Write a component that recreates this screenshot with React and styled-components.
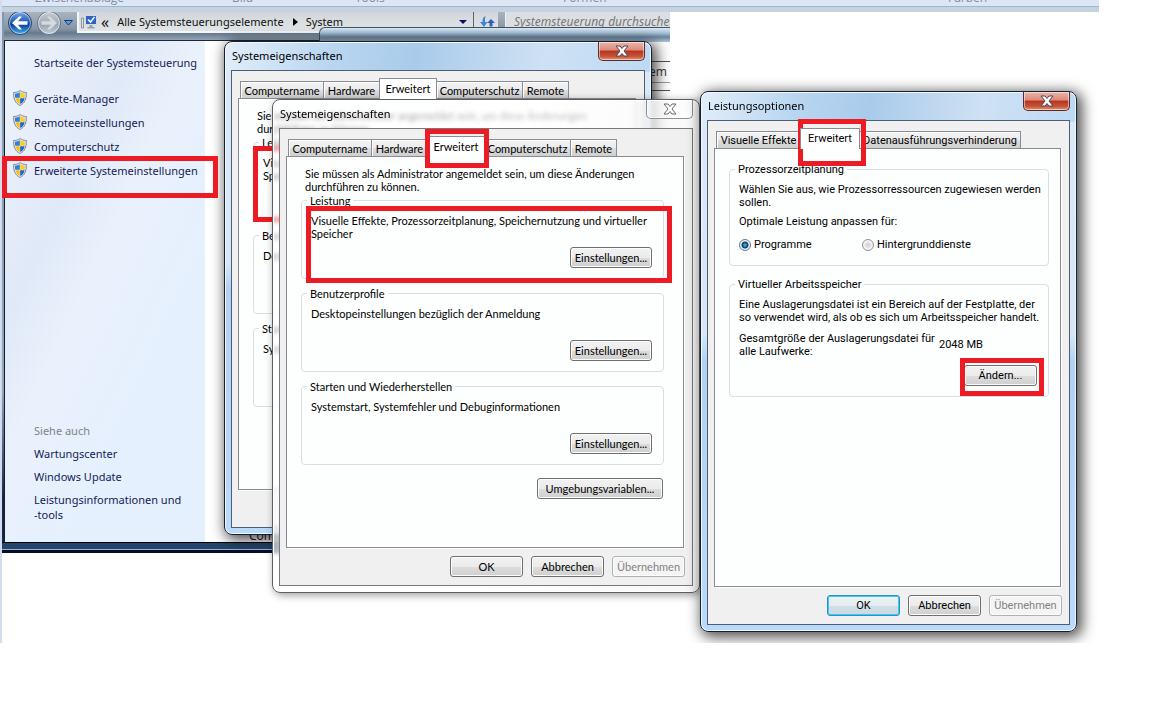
import React, { useState } from "react";
import styled, { createGlobalStyle, css } from "styled-components";

const GlobalStyle = createGlobalStyle`
    * {
        box-sizing: border-box;
    }

    body {
        margin: 0;
        background: #fff;
        color: #000;
        font-family: "Open Sans", "Noto Sans", sans-serif;
        font-size: 11px;
    }

    button, input {
        font: inherit;
        color: inherit;
        margin: 0;
        padding: 0;
    }

    p, h2 {
        margin: 0;
        font-weight: normal;
    }

    a {
        color: inherit;
        text-decoration: none;
    }
`;

const uiFont = `"Noto Sans", "Open Sans", sans-serif`;

// Desktop
const Desktop = styled.main`
    position: relative;
    height: 643px;
    overflow: hidden;
    border-left: 2px solid #d3dded;
`;

const Ribbon = styled.header`
    max-width: 1099px;
    height: 12px;
    margin-left: -2px;
    background: #c5d2e0;
`;

const RibbonLabels = styled.div`
    display: grid;
    grid-template-columns: 197px 123px 208px 385px 1fr;
    align-content: end;
    height: 7px;
    padding: 0 0 1px 35px;
    overflow: hidden;
    background: #dce6f4;
    border-bottom: 1px solid #9fb6cc;
    color: #7f8fa5;
    font-size: 12px;
    line-height: 15px;
`;

const Placed = styled.div`
    position: absolute;
    left: ${(p) => p.$x}px;
    top: ${(p) => p.$y}px;
    width: ${(p) => p.$w}px;
    height: ${(p) => p.$h}px;
`;

const Mark = styled(Placed)`
    border: 5px solid #ed1c24;
    pointer-events: none;
`;

// Explorer window
const Explorer = styled(Placed)`
    display: flex;
    flex-direction: column;
    overflow: hidden;
    padding-left: 2px;
    background: linear-gradient(#8498ab, #8fa5ba 70%, #12294c 90%);
    font-family: ${uiFont};
`;

const AddressRow = styled.div`
    display: flex;
    align-items: flex-start;
    height: 29px;
    background: linear-gradient(#a8b3bf, #8696a6 60%, #66798c 75%, #93a5b6);
    border-bottom: 1px solid #1c2733;
`;

const NavButtons = styled.div`
    display: flex;
    align-items: center;
    width: 72px;
    height: 21px;
    margin-right: 1px;
`;

const PlainButton = styled.button`
    display: flex;
    align-items: center;
    justify-content: center;
    flex: none;
    width: ${(p) => p.$w}px;
    height: 20px;
    border: none;
    background: none;
    overflow: visible;
`;

const AddressBox = styled.nav`
    display: flex;
    align-items: center;
    width: 421px;
    height: 21px;
    padding-left: 2px;
    background: linear-gradient(#d2d6da, #e2e5e7);
    border: solid #f4f6f8;
    border-width: 0 0 2px 2px;
    color: #111;
    white-space: nowrap;
`;

const Chevrons = styled.span`
    margin-left: 4px;
    font-size: 16px;
    line-height: 16px;
`;

const Crumb = styled.a`
    margin: 0 8px;
`;

const Spacer = styled.span`
    flex: 1;
`;

const RefreshSlot = styled.span`
    display: flex;
    align-items: center;
    height: 20px;
    padding-left: 2px;
    border-left: 1px solid #60656c;
`;

const SearchBox = styled.input`
    flex: 1;
    min-width: 0;
    height: 21px;
    margin-left: 7px;
    padding-left: 8px;
    border: solid #eef1f4;
    border-width: 0 0 2px 1px;
    border-radius: 0;
    background: #dcdfe2;
    font-size: 12px;
    font-style: italic;

    &::placeholder {
        color: #777;
        opacity: 1;
    }
`;

const ExplorerBody = styled.div`
    display: flex;
    flex: 1;
    border-left: 1px solid #111c2c;
    background: #fff;
`;

const Sidebar = styled.nav`
    display: flex;
    flex-direction: column;
    width: 200px;
    padding: 14px 0 20px 8px;
    background: linear-gradient(115deg, #eef4fc, #e0e9f8 30%, #e9f1fc 45%, #e5f0fe 70%);
    color: #151c55;
    line-height: 15px;

    svg {
        flex: none;
    }
`;

const SideLink = styled.a`
    display: flex;
    align-items: center;
    gap: 7px;
    margin-bottom: ${(p) => p.$gap || 0}px;
    padding-left: ${(p) => (p.$icon ? 0 : 21)}px;
    white-space: nowrap;
`;

const SideHeading = styled.p`
    margin: auto 0 8px;
    padding-left: 21px;
    color: #7c8488;
`;

const ExplorerContent = styled.div`
    display: flex;
    align-items: flex-end;
    flex: 1;
    padding-left: 44px;
    color: #331c1c;
    font-size: 12px;
    line-height: 13px;
`;

const ExplorerEdge = styled.div`
    height: 11px;
    margin-left: -2px;
    background: #050d28;
    border-top: 1px solid #000;

    &::before {
        content: "";
        display: block;
        height: 6px;
        background: #24456c;
        border-bottom: 1px solid #9db4cb;
    }
`;

const BackPane = styled(Placed)`
    overflow: hidden;
    background: linear-gradient(#dceaf6, #a4bfd6 5px, #6b869f 9px, #b0c6da 14px, #fff 14px);
    border: solid #44525f;
    border-width: 1px 0 0 1px;
    border-radius: 6px 0 0 0;
    padding-top: 13px;
    font-family: ${uiFont};
    color: #444;
    font-size: 12px;
    text-align: right;
`;

const PaneRow = styled.div`
    height: ${(p) => p.$h}px;
    padding-right: 3px;
    border-bottom: 1px solid ${(p) => p.$line};
    line-height: 20px;
`;

// Dialog windows
const blueGlass = css`
    background:
        linear-gradient(100deg, #e2eefa, #b9d6f1 25%, #a9cbea 45%, #cfe1f4 75%, #bcd9f5) 0 0 / 100% 30px no-repeat,
        linear-gradient(#dbe9f8, #d6e7f8 45%, #b2d2f4 50%, #b9dafb);
    border-color: #15202e;
    box-shadow: inset 0 0 0 1px #f0f8ff, 3px 3px 14px 2px rgba(0, 0, 0, 0.7);
`;

const paleGlass = css`
    background: linear-gradient(100deg, rgba(255, 255, 255, 0.55), rgba(255, 255, 255, 0.75) 50%, rgba(244, 244, 244, 0.7));
    backdrop-filter: blur(2px);
    border-color: #5c5f62;
    box-shadow: inset 0 0 0 1px #fff, 2px 2px 8px rgba(0, 0, 0, 0.4);
`;

const DialogFrame = styled(Placed)`
    display: flex;
    flex-direction: column;
    padding: 0 6px 6px;
    border: 1px solid;
    border-radius: 8px;
    ${(p) => (p.$active ? blueGlass : paleGlass)}
`;

const TitleBar = styled.div`
    display: flex;
    align-items: flex-start;
    justify-content: space-between;
    height: 28px;
    padding-left: 1px;
`;

const Title = styled.h2`
    font-family: ${uiFont};
    font-size: 11px;
    line-height: 28px;
`;

const CloseButton = styled.button`
    display: flex;
    align-items: center;
    justify-content: center;
    width: 47px;
    height: 19px;
    border: 1px solid ${(p) => (p.$active ? "#5b2a2a" : "#8b9096")};
    border-top: none;
    border-radius: 0 0 5px 5px;
    background: ${(p) =>
        p.$active
            ? "linear-gradient(#eab5a8, #dd8a7a 45%, #b8341f 50%, #c4553a 80%, #e09a6c)"
            : "rgba(255, 255, 255, 0.3)"};
    box-shadow: inset 0 0 0 1px rgba(255, 255, 255, 0.5);
`;

const Client = styled.div`
    display: flex;
    flex: 1;
    flex-direction: column;
    padding: 7px 8px 8px 6px;
    background: #f0f0f0;
    border: 1px solid ${(p) => (p.$active ? "#4d5d72" : "#77797b")};
    font-family: ${(p) => p.$font};
    font-size: 11px;
    line-height: 13px;
`;

const TabList = styled.div`
    display: flex;
    align-items: flex-end;
    height: 20px;
    padding-left: 2px;
`;

const Tab = styled.button`
    width: ${(p) => p.$w}px;
    height: 17px;
    margin-right: -1px;
    border: 1px solid #898c95;
    border-bottom: none;
    background: linear-gradient(#f3f3f3, #ebebeb 50%, #dddddd 51%, #cfcfcf);
    box-shadow: inset 1px 1px 0 #fff;
    white-space: nowrap;

    ${(p) =>
        p.$selected &&
        css`
            position: relative;
            z-index: 1;
            height: 21px;
            margin-bottom: -1px;
            padding-bottom: 2px;
            background: #fff;
        `}
`;

const Panel = styled.div`
    display: flex;
    flex: 1;
    flex-direction: column;
    gap: ${(p) => p.$gap}px;
    padding: ${(p) => p.$pad};
    background: #fdfefe;
    border: 1px solid #898c95;
    box-shadow: 1px 1px 0 #fff;
`;

const Intro = styled.p`
    margin: 0 0 -7px 4px;
`;

const Group = styled.fieldset`
    min-width: 0;
    margin: 0;
    padding: 7px 11px 10px 9px;
    border: 1px solid #d5dfe5;
    border-radius: 4px;
`;

const Legend = styled.legend`
    margin-left: -4px;
    padding: 0 3px;
`;

const GroupBody = styled.div`
    display: flex;
    flex-direction: column;
    justify-content: space-between;
    gap: ${(p) => p.$gap || 0}px;
    min-height: ${(p) => p.$h || 0}px;
`;

const Lines = styled.p`
    white-space: nowrap;
`;

const PushButton = styled.button`
    align-self: flex-end;
    width: ${(p) => p.$w || 73}px;
    height: 21px;
    border: 1px solid #707070;
    border-radius: 3px;
    background: linear-gradient(#f2f2f2, #ebebeb 50%, #dddddd 51%, #cfcfcf);
    box-shadow: inset 0 0 0 1px #fcfcfc;
    white-space: nowrap;

    ${(p) =>
        p.$primary &&
        css`
            border-color: #2f8fc0;
            background: linear-gradient(#eef3f6, #e3ecf1 50%, #d3dfe6 51%, #ccd8e0);
            box-shadow: inset 0 0 0 1px #35cdf8;
        `}

    &:disabled {
        border-color: #adb2b5;
        background: #f4f4f4;
        color: #838383;
    }
`;

const Footer = styled.div`
    display: flex;
    justify-content: flex-end;
    gap: 8px;
    margin-right: -1px;
    padding-top: 8px;
`;

const PanelActions = styled.div`
    display: flex;
    justify-content: flex-end;
    padding: 5px 1px 0 0;
`;

const RadioRow = styled.div`
    display: grid;
    grid-template-columns: 123px 1fr;
    margin: 4px 0;
`;

const RadioLabel = styled.label`
    display: flex;
    align-items: center;
    gap: 3px;
`;

const Radio = styled.input`
    appearance: none;
    width: 12px;
    height: 12px;
    border: 1px solid #8e8f8f;
    border-radius: 50%;
    background: radial-gradient(#d8d8d8 20%, #f6f6f6 60%);

    &:checked {
        border-color: #5c7a94;
        background: radial-gradient(circle, #4fc0f0 0, #0b3a60 3px, #f2f5f7 4px);
    }
`;

const SizeRow = styled.div`
    display: grid;
    grid-template-columns: 200px 1fr;
    align-items: center;
`;

function CloseIcon({ active }) {
    const d = "M1 1h4l2 2.5L9 1h4L9 6l4 5H9L7 8.500 5 11H1l4-5z";
    return (
        <svg width="14" height="12" viewBox="0 0 14 12" aria-hidden="true">
            <path d={d} fill="#fff" stroke={active ? "#4e4658" : "#63676b"} strokeWidth="1" />
        </svg>
    );
}

function ShieldIcon() {
    return (
        <svg width="14" height="16" viewBox="0 0 14 16" aria-hidden="true">
            <path d="M7 .5C5 2 3 2.500.6 2.500.5 9 2 13 7 15.500 12 13 13.500 9 13.400 2.500 11 2.500 9 2 7 .5z" fill="#e6e9ec" stroke="#84898f" />
            <path d="M6.800 2.200v5.600H2.200C2 6.500 1.900 5 1.900 3.700 4 3.600 5.500 3 6.800 2.200z" fill="#2f7fd6" />
            <path d="M7.200 2.200v5.600h4.600c.2-1.300.3-2.800.3-4.100C10 3.600 8.500 3 7.200 2.200z" fill="#f6cf2e" />
            <path d="M6.800 8.200v5.900C4.200 12.700 2.800 10.700 2.300 8.200z" fill="#f3c220" />
            <path d="M7.200 8.200v5.900c2.600-1.400 4-3.400 4.500-5.900z" fill="#1f63bd" />
        </svg>
    );
}

function ArrowDisc({ back }) {
    const id = back ? "disc-back" : "disc-forward";
    return (
        <svg width="26" height="26" viewBox="0 0 26 26" aria-hidden="true">
            <defs>
                <linearGradient id={id} x1="0" y1="0" x2="0" y2="1">
                    <stop offset="0" stopColor={back ? "#7aa9e4" : "#c6ccd2"} />
                    <stop offset=".5" stopColor={back ? "#1c55b4" : "#a3adb7"} />
                    <stop offset=".55" stopColor={back ? "#0b3b98" : "#98a4af"} />
                    <stop offset="1" stopColor={back ? "#3fb5f2" : "#c4ccd4"} />
                </linearGradient>
            </defs>
            <circle cx="13" cy="13" r="11.500" fill={`url(#${id})`} stroke={back ? "#2a466f" : "#657483"} />
            <circle cx="13" cy="13" r="10.500" fill="none" stroke="#fff" strokeOpacity=".55" />
            <path
                d="M5 13l7-6.500h3L11 11.300h9.500v3.400H11l4 4.800h-3z"
                transform={back ? undefined : "rotate(180 13 13)"}
                fill={back ? "#fff" : "#d5dade"}
            />
        </svg>
    );
}

function MonitorIcon() {
    return (
        <svg width="16" height="16" viewBox="0 0 16 16" aria-hidden="true">
            <path d="M.5 4h2v10h-2z" fill="#dfe3e6" stroke="#7b838a" strokeWidth=".8" />
            <path d="M4.500 1.500h11v9h-11z" fill="#2c62c4" stroke="#d5dbe2" />
            <path d="M7 5.500l2.500 2.500 4-5" fill="none" stroke="#fff" strokeWidth="1.600" />
            <path d="M8.500 11h3v2h2v1.500h-7V13h2z" fill="#98a0a8" />
        </svg>
    );
}

function Triangle({ d, fill, w = 8, stroke }) {
    return (
        <svg width={w} height="8" viewBox={`0 0 ${w} 8`} aria-hidden="true">
            <path d={d} fill={fill} stroke={stroke} />
        </svg>
    );
}

function RefreshIcon() {
    return (
        <svg width="16" height="14" viewBox="0 0 16 14" aria-hidden="true">
            <path d="M6.500 1C4 2 3.500 4 3.500 7H1l4 5 3.500-5H6C6 4 6 2.500 6.500 1z" fill="#3f86cf" />
            <path d="M12 4l4 4h-2.500v3.500h-3V8H8z" fill="#2b62ba" />
        </svg>
    );
}

function Dialog({ title, x, y, w, h, active, font, tabs, children, primary }) {
    const [selected, setSelected] = useState("Erweitert");

    return (
        <DialogFrame as="section" aria-label={title} $x={x} $y={y} $w={w} $h={h} $active={active}>
            <TitleBar>
                <Title>{title}</Title>
                <CloseButton $active={active} aria-label="Schließen">
                    <CloseIcon active={active} />
                </CloseButton>
            </TitleBar>
            <Client $active={active} $font={font}>
                <TabList role="tablist">
                    {tabs.map((tab) => (
                        <Tab
                            key={tab.name}
                            role="tab"
                            aria-selected={selected === tab.name}
                            $selected={selected === tab.name}
                            $w={tab.width}
                            onClick={() => setSelected(tab.name)}
                        >
                            {tab.name}
                        </Tab>
                    ))}
                </TabList>
                {children}
                <Footer>
                    <PushButton $primary={primary}>OK</PushButton>
                    <PushButton>Abbrechen</PushButton>
                    <PushButton disabled>Übernehmen</PushButton>
                </Footer>
            </Client>
        </DialogFrame>
    );
}

const systemTabs = [
    { name: "Computername", width: 84 },
    { name: "Hardware", width: 57 },
    { name: "Erweitert", width: 58 },
    { name: "Computerschutz", width: 87 },
    { name: "Remote", width: 47 },
];

const systemGroups = [
    { name: "Leistung", text: "Visuelle Effekte, Prozessorzeitplanung, Speichernutzung und virtueller Speicher" },
    { name: "Benutzerprofile", text: "Desktopeinstellungen bezüglich der Anmeldung" },
    { name: "Starten und Wiederherstellen", text: "Systemstart, Systemfehler und Debuginformationen" },
];

function SystemDialog({ x, y, active }) {
    return (
        <Dialog
            title="Systemeigenschaften"
            x={x}
            y={y}
            w={428}
            h={494}
            active={active}
            tabs={systemTabs}
            font={`Lato, "Liberation Sans", sans-serif`}
        >
            <Panel $gap={8} $pad="10px 19px 0 14px">
                <Intro>
                    Sie müssen als Administrator angemeldet sein, um diese Änderungen
                    <br />
                    durchführen zu können.
                </Intro>
                {systemGroups.map((group) => (
                    <Group key={group.name}>
                        <Legend>{group.name}</Legend>
                        <GroupBody $h={54}>
                            <p>{group.text}</p>
                            <PushButton $w={82}>Einstellungen...</PushButton>
                        </GroupBody>
                    </Group>
                ))}
                <PanelActions>
                    <PushButton $w={126}>Umgebungsvariablen...</PushButton>
                </PanelActions>
            </Panel>
        </Dialog>
    );
}

const performanceTabs = [
    { name: "Visuelle Effekte", width: 85 },
    { name: "Erweitert", width: 60 },
    { name: "Datenausführungsverhinderung", width: 162 },
];

function PerformanceDialog() {
    const [target, setTarget] = useState("Programme");

    return (
        <Dialog
            title="Leistungsoptionen"
            x={698}
            y={91}
            w={377}
            h={541}
            active
            primary
            tabs={performanceTabs}
            font={`Roboto, "Liberation Sans", sans-serif`}
        >
            <Panel $gap={12} $pad="14px 11px 0 14px">
                <Group>
                    <Legend>Prozessorzeitplanung</Legend>
                    <GroupBody $gap={6} $h={72}>
                        <Lines>
                            Wählen Sie aus, wie Prozessorressourcen zugewiesen werden
                            <br />
                            sollen.
                        </Lines>
                        <p>Optimale Leistung anpassen für:</p>
                        <RadioRow>
                            {["Programme", "Hintergrunddienste"].map((name) => (
                                <RadioLabel key={name}>
                                    <Radio
                                        type="radio"
                                        name="target"
                                        checked={target === name}
                                        onChange={() => setTarget(name)}
                                    />
                                    {name}
                                </RadioLabel>
                            ))}
                        </RadioRow>
                    </GroupBody>
                </Group>
                <Group>
                    <Legend>Virtueller Arbeitsspeicher</Legend>
                    <GroupBody $gap={6} $h={88}>
                        <Lines>
                            Eine Auslagerungsdatei ist ein Bereich auf der Festplatte, der
                            <br />
                            so verwendet wird, als ob es sich um Arbeitsspeicher handelt.
                        </Lines>
                        <SizeRow>
                            <Lines>
                                Gesamtgröße der Auslagerungsdatei für
                                <br />
                                alle Laufwerke:
                            </Lines>
                            <span>2048 MB</span>
                        </SizeRow>
                        <PushButton>Ändern...</PushButton>
                    </GroupBody>
                </Group>
            </Panel>
        </Dialog>
    );
}

function ControlPanel() {
    return (
        <Explorer $x={0} $y={12} $w={668} $h={541}>
            <AddressRow>
                <NavButtons>
                    <PlainButton $w={32} aria-label="Zurück">
                        <ArrowDisc back />
                    </PlainButton>
                    <PlainButton $w={26} aria-label="Vorwärts">
                        <ArrowDisc />
                    </PlainButton>
                    <PlainButton $w={12} aria-label="Verlauf">
                        <Triangle d="M.5 1.500h8L4.500 6z" fill="#5aa0e6" stroke="#123d74" w={9} />
                    </PlainButton>
                </NavButtons>
                <AddressBox>
                    <MonitorIcon />
                    <Chevrons>«</Chevrons>
                    <Crumb href="#">Alle Systemsteuerungselemente</Crumb>
                    <Triangle d="M1 0l5 4-5 4z" fill="#000" w={6} />
                    <Crumb href="#">System</Crumb>
                    <Spacer />
                    <PlainButton $w={20} aria-label="Vorherige Orte">
                        <Triangle d="M0 2h8L4 6z" fill="#0b0b6c" />
                    </PlainButton>
                    <RefreshSlot>
                        <PlainButton $w={22} aria-label="Aktualisieren">
                            <RefreshIcon />
                        </PlainButton>
                    </RefreshSlot>
                </AddressBox>
                <SearchBox placeholder="Systemsteuerung durchsuchen" aria-label="Suche" />
            </AddressRow>
            <ExplorerBody>
                <Sidebar>
                    <SideLink href="#" $gap={20}>Startseite der Systemsteuerung</SideLink>
                    {["Geräte-Manager", "Remoteeinstellungen", "Computerschutz", "Erweiterte Systemeinstellungen"].map((name) => (
                        <SideLink key={name} href="#" $icon $gap={8}>
                            <ShieldIcon />
                            {name}
                        </SideLink>
                    ))}
                    <SideHeading>Siehe auch</SideHeading>
                    <SideLink href="#" $gap={8}>Wartungscenter</SideLink>
                    <SideLink href="#" $gap={8}>Windows Update</SideLink>
                    <SideLink href="#">
                        Leistungsinformationen und
                        <br />
                        -tools
                    </SideLink>
                </Sidebar>
                <ExplorerContent>Computername</ExplorerContent>
            </ExplorerBody>
            <ExplorerEdge />
        </Explorer>
    );
}

export default function App() {
    return (
        <>
            <GlobalStyle />
            <Desktop>
                <Ribbon>
                    <RibbonLabels>
                        <span>Zwischenablage</span>
                        <span>Bild</span>
                        <span>Tools</span>
                        <span>Formen</span>
                        <span>Farben</span>
                    </RibbonLabels>
                </Ribbon>
                <ControlPanel />
                <BackPane $x={317} $y={27} $w={351} $h={70}>
                    <PaneRow $h={21} $line="#555" />
                    <PaneRow $h={21} $line="#999">System</PaneRow>
                    <PaneRow $h={8} $line="#555" />
                </BackPane>
                <SystemDialog x={222} y={41} active />
                <Mark $x={251} $y={146} $w={366} $h={76} />
                <SystemDialog x={270} y={99} />
                <PerformanceDialog />
                <Mark $x={0} $y={156} $w={216} $h={42} />
                <Mark $x={423} $y={129} $w={64} $h={39} />
                <Mark $x={304} $y={206} $w={366} $h={77} />
                <Mark $x={796} $y={119} $w={68} $h={47} />
                <Mark $x={958} $y={358} $w={84} $h={38} />
            </Desktop>
        </>
    );
}
